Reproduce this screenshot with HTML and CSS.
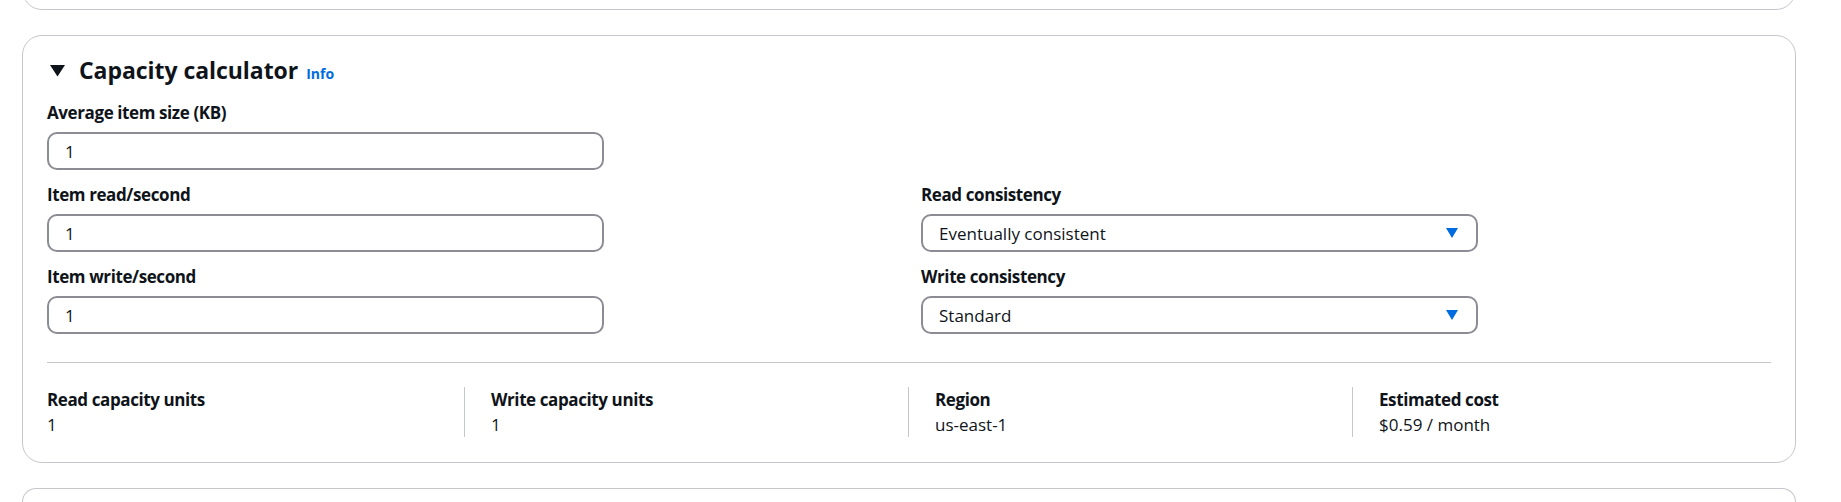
FILE: index.html
```html
<!DOCTYPE html>
<html lang="en">
<head>
<meta charset="utf-8">
<title>Capacity calculator</title>
<link rel="stylesheet" href="styles.css">
</head>
<body>
<div class="page">
  <section class="card card-prev"></section>
  <section class="card calc">
    <header class="calc-header">
      <svg class="caret" width="20" height="20" viewBox="0 0 20 20" aria-hidden="true"><polygon points="3,5 18,5 10.5,16.5" fill="#0f141a"/></svg>
      <div class="title-group">
        <h2 class="calc-title">Capacity calculator</h2>
        <a class="info-link" href="#">Info</a>
      </div>
    </header>
    <div class="form-grid">
      <div class="field">
        <label class="field-label">Average item size (KB)</label>
        <div class="text-input">1</div>
      </div>
      <div class="field-empty"></div>
      <div class="field">
        <label class="field-label">Item read/second</label>
        <div class="text-input">1</div>
      </div>
      <div class="field">
        <label class="field-label">Read consistency</label>
        <div class="select">
          <span>Eventually consistent</span>
          <svg class="select-arrow" width="12" height="10" viewBox="0 0 12 10" aria-hidden="true"><polygon points="0,0 12,0 6,10" fill="#006ce0"/></svg>
        </div>
      </div>
      <div class="field">
        <label class="field-label">Item write/second</label>
        <div class="text-input">1</div>
      </div>
      <div class="field">
        <label class="field-label">Write consistency</label>
        <div class="select">
          <span>Standard</span>
          <svg class="select-arrow" width="12" height="10" viewBox="0 0 12 10" aria-hidden="true"><polygon points="0,0 12,0 6,10" fill="#006ce0"/></svg>
        </div>
      </div>
    </div>
    <hr class="divider">
    <div class="stats">
      <div class="stat">
        <div class="stat-label">Read capacity units</div>
        <div class="stat-value">1</div>
      </div>
      <div class="stat">
        <div class="stat-label">Write capacity units</div>
        <div class="stat-value">1</div>
      </div>
      <div class="stat">
        <div class="stat-label">Region</div>
        <div class="stat-value">us-east-1</div>
      </div>
      <div class="stat">
        <div class="stat-label">Estimated cost</div>
        <div class="stat-value">$0.59 / month</div>
      </div>
    </div>
  </section>
  <section class="card card-next"></section>
</div>
</body>
</html>
```
FILE: styles.css
```css
html, body {
  margin: 0;
  height: 100%;
  overflow: hidden;
  background: #ffffff;
}

body {
  font-family: "Open Sans", "Noto Sans", Arial, sans-serif;
  color: #0f141a;
}

.page {
  display: flex;
  flex-direction: column;
  gap: 25px;
  padding: 0 45px 0 22px;
  margin-top: -30px;
}

.card {
  border: 1px solid #c6c6cd;
  border-radius: 20px;
  background: #ffffff;
  box-sizing: border-box;
}

.card-prev {
  height: 40px;
}

.card-next {
  height: 14px;
  border-bottom: 0;
  border-radius: 20px 20px 0 0;
}

.calc {
  height: 428px;
  padding: 19px 24px 25px;
}

.calc-header {
  display: flex;
  align-items: center;
  gap: 12px;
  height: 30px;
  margin-bottom: 17px;
}

.caret {
  flex: none;
  display: block;
}

.title-group {
  display: flex;
  align-items: baseline;
  gap: 8px;
}

.calc-title {
  margin: 0;
  font-size: 23px;
  font-weight: 700;
  line-height: 30px;
  letter-spacing: -0.05px;
}

.info-link {
  font-size: 14px;
  font-weight: 700;
  color: #006ce0;
  text-decoration: none;
}

.form-grid {
  display: grid;
  grid-template-columns: 1fr 1fr;
  column-gap: 24px;
  row-gap: 14px;
}

.field-label {
  display: block;
  font-size: 17px;
  font-weight: 700;
  line-height: 22px;
  letter-spacing: -0.4px;
  margin-bottom: 8px;
}

.text-input,
.select {
  width: 557px;
  height: 38px;
  box-sizing: border-box;
  border: 2px solid #8c8c94;
  border-radius: 10px;
  padding: 0 18px 0 16px;
  font-size: 17px;
  display: flex;
  align-items: center;
}

.select {
  justify-content: space-between;
}

.select-arrow {
  display: block;
  flex: none;
}

.divider {
  border: 0;
  border-top: 1px solid #c6c6cd;
  margin: 28px 0 24px;
}

.stats {
  display: grid;
  grid-template-columns: repeat(4, 1fr);
  margin: 0 -25px 0 -27px;
}

.stat {
  padding-left: 26px;
  border-left: 1px solid #c6c6cd;
}

.stat:first-child {
  border-left-color: transparent;
}

.stat-label {
  font-size: 17px;
  font-weight: 700;
  line-height: 25px;
  letter-spacing: -0.4px;
}

.stat-value {
  font-size: 17px;
  line-height: 25px;
}
```
